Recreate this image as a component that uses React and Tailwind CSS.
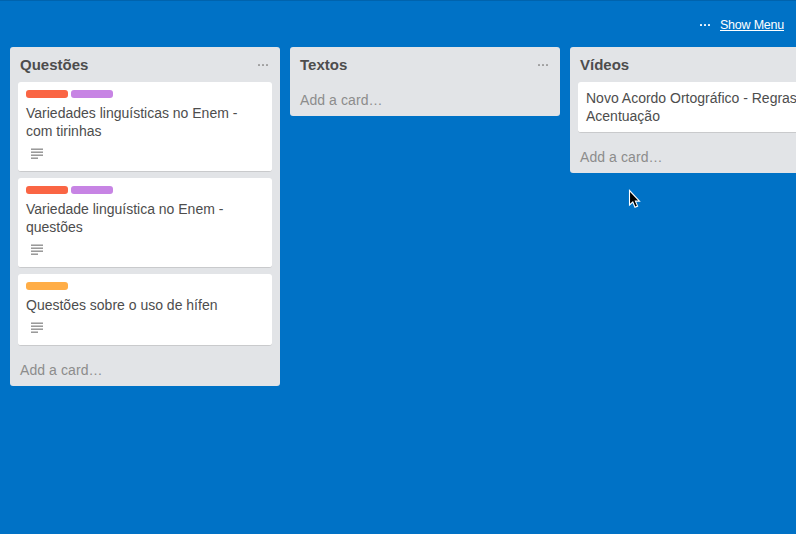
import React from "react";

const LABEL_COLORS = {
  red: "bg-[#fa6544]",
  purple: "bg-[#c784e4]",
  orange: "bg-[#ffad46]",
};

const LISTS = [
  {
    title: "Questões",
    cards: [
      {
        labels: ["red", "purple"],
        lines: ["Variedades linguísticas no Enem -", "com tirinhas"],
        description: true,
      },
      {
        labels: ["red", "purple"],
        lines: ["Variedade linguística no Enem -", "questões"],
        description: true,
      },
      { labels: ["orange"], lines: ["Questões sobre o uso de hífen"], description: true },
    ],
  },
  { title: "Textos", cards: [] },
  {
    title: "Vídeos",
    cards: [{ labels: [], lines: ["Novo Acordo Ortográfico - Regras", "Acentuação"] }],
  },
];

function Dots({ className }) {
  return (
    <svg width="10" height="2" viewBox="0 0 10 2" fill="currentColor" className={className}>
      <rect x="0" width="2" height="2" rx="0.4" />
      <rect x="4" width="2" height="2" rx="0.4" />
      <rect x="8" width="2" height="2" rx="0.4" />
    </svg>
  );
}

function DescriptionIcon() {
  return (
    <svg width="12" height="11" viewBox="0 0 12 11" fill="#8f8f8f" className="mt-2 ml-[5px]">
      <rect y="0.5" width="12" height="1.4" />
      <rect y="3.5" width="12" height="1.4" />
      <rect y="6.5" width="12" height="1.4" />
      <rect y="9.5" width="7" height="1.4" />
    </svg>
  );
}

function Card({ card }) {
  return (
    <article
      className={`rounded-[3px] border-b border-[#c9cacc] bg-white px-2 ${
        card.description ? "pt-2 pb-3" : "pt-[7px] pb-[7px]"
      }`}
    >
      {card.labels.length > 0 && (
        <div className="mb-1.5 flex gap-[3px]">
          {card.labels.map((color) => (
            <span key={color} className={`h-2 w-[42px] rounded-[3px] ${LABEL_COLORS[color]}`} />
          ))}
        </div>
      )}
      <div className="text-sm leading-[18px] whitespace-nowrap text-[#4d4d4d]">
        {card.lines.map((line) => (
          <p key={line}>{line}</p>
        ))}
      </div>
      {card.description && <DescriptionIcon />}
    </article>
  );
}

function List({ list }) {
  return (
    <section className="w-[270px] shrink-0 rounded-[3px] bg-[#e2e4e7]">
      <header className="flex h-[29px] items-start justify-between pt-[9px] pr-3 pl-2.5">
        <h2 className="text-[15px] leading-[18px] font-bold text-[#4d4d4d]">{list.title}</h2>
        <Dots className="mt-2 text-[#9b9b9b]" />
      </header>
      {list.cards.length > 0 && (
        <div className="flex flex-col gap-1.5 px-2 pt-1.5">
          {list.cards.map((card) => (
            <Card key={card.lines[0]} card={card} />
          ))}
        </div>
      )}
      <div className="h-10 pt-[15px] pl-2.5 text-sm leading-[18px] tracking-[0.08px] text-[#8c8c8c]">
        Add a card…
      </div>
    </section>
  );
}

export default function App() {
  return (
    <main className="relative h-[534px] w-[796px] overflow-hidden border-t border-[#0063ad] bg-[#0072c6] font-['Liberation_Sans',Arial,sans-serif]">
      <div className="flex h-[46px] items-center justify-end gap-2.5 pt-px pr-3 text-white">
        <Dots />
        <a className="w-16 text-[12.5px] leading-4 tracking-[-0.22px] whitespace-nowrap underline underline-offset-1">
          Show Menu
        </a>
      </div>
      <div className="flex items-start gap-2.5 pl-2.5">
        {LISTS.map((list) => (
          <List key={list.title} list={list} />
        ))}
      </div>
      <svg
        className="absolute top-[188px] left-[628px]"
        width="13"
        height="20"
        viewBox="0 0 13 20"
      >
        <path
          d="M1.5 1.5V16L4.8 13L7 18.2L9.6 17.1L7.4 12.1H11.5Z"
          fill="#000"
          stroke="#fff"
          strokeWidth="1.1"
        />
      </svg>
    </main>
  );
}
